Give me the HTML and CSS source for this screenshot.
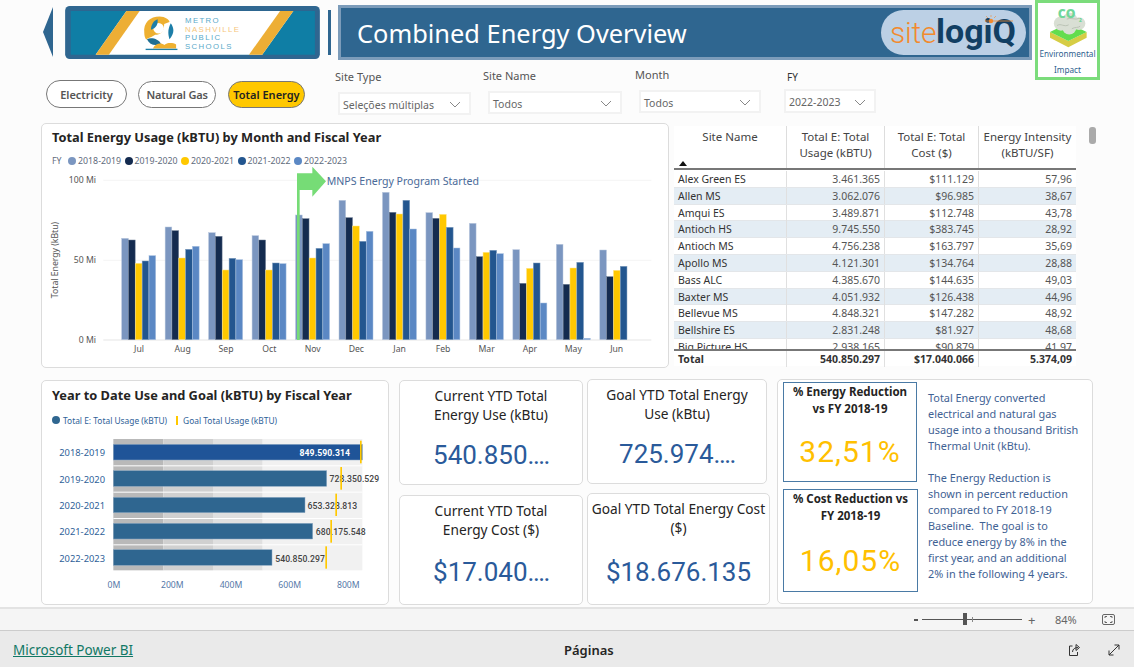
FILE: index.html
```html
<!DOCTYPE html>
<html lang="en">
<head>
<meta charset="utf-8">
<title>Combined Energy Overview</title>
<link rel="stylesheet" href="styles.css">
</head>
<body>
<div class="page">
<main class="canvas">
  <header class="head">
    <div class="head-main">
      <div class="banner">
        <svg class="arrow" viewBox="0 0 10 50"><polygon points="10,0 0,25 10,50"/></svg>
        <svg class="logo" viewBox="73 18 769 160">
          <rect x="73" y="18" width="769" height="160" rx="14" fill="#2f6690"/>
          <rect x="90" y="33" width="737" height="132" fill="#0f7ea5"/>
          <polygon points="258,33 762,33 668,165 165,165" fill="#fff"/>
          <polygon points="258,33 298,33 205,165 165,165" fill="#edae35"/>
          <polygon points="722,33 762,33 668,165 628,165" fill="#edae35"/>
          <path d="M312 100C308 68 330 50 358 50C375 50 388 60 388 66L372 72C372 95 360 105 345 105C335 112 322 115 318 120C314 113 312 108 312 100Z" fill="#eeb030"/>
          <circle cx="355" cy="85" r="16" fill="#fff"/>
          <path d="M332 90C332 75 340 62 352 58C354 72 348 85 332 90Z" fill="#1d7ea8"/>
          <path d="M392 70C402 85 404 100 388 118C382 100 384 85 392 70Z" fill="#1d7ea8"/>
          <path d="M320 118C335 112 355 118 362 132C345 140 328 135 320 118Z" fill="#1f6f93"/>
          <path d="M338 146C345 130 365 128 372 136C380 128 398 128 408 134L408 146Z" fill="#eeb030"/>
          <rect x="316" y="147" width="96" height="4" fill="#1d7ea8"/>
          <text class="logo-t blue" x="435" y="68">METRO</text>
          <text class="logo-t orange" x="435" y="95">NASHVILLE</text>
          <text class="logo-t blue" x="435" y="122">PUBLIC</text>
          <text class="logo-t blue" x="435" y="149">SCHOOLS</text>
        </svg>
        <div class="divider"></div>
        <div class="title-bar">
          <h1 class="title">Combined Energy Overview</h1>
          <svg class="sitelogiq" viewBox="0 0 145 45">
            <rect x="0" y="0" width="145" height="45" rx="22.5" fill="#bcd0e5"/>
            <text class="sl-a" x="9" y="33">site</text>
            <text class="sl-b" x="55" y="33">logiQ</text>
            <line x1="104" y1="11" x2="132" y2="11" stroke="#f28a2e" stroke-width="0.8"/>
            <circle cx="110" cy="11" r="2.2" fill="#f28a2e"/>
            <path d="M110 5V7M105 6L107 8M115 6L113 8" stroke="#f28a2e" stroke-width="0.6"/>
          </svg>
        </div>
      </div>
      <div class="controls">
        <button class="pill pill-a">Electricity</button>
        <button class="pill pill-b">Natural Gas</button>
        <button class="pill pill-c">Total Energy</button>
        <div class="slicer s1">
          <div class="s-label">Site Type</div>
          <div class="s-box">Seleções múltiplas<svg class="chev" viewBox="0 0 12 7"><polyline points="1,1 6,6 11,1"/></svg></div>
        </div>
        <div class="slicer s2">
          <div class="s-label">Site Name</div>
          <div class="s-box">Todos<svg class="chev" viewBox="0 0 12 7"><polyline points="1,1 6,6 11,1"/></svg></div>
        </div>
        <div class="slicer s3">
          <div class="s-label">Month</div>
          <div class="s-box">Todos<svg class="chev" viewBox="0 0 12 7"><polyline points="1,1 6,6 11,1"/></svg></div>
        </div>
        <div class="slicer s4">
          <div class="s-label">FY</div>
          <div class="s-box">2022-2023<svg class="chev" viewBox="0 0 12 7"><polyline points="1,1 6,6 11,1"/></svg></div>
        </div>
      </div>
    </div>
    <div class="env">
      <svg class="env-icon" viewBox="530 8 128 140">
        <polygon points="538,98 595,126 652,98 652,116 595,146 538,116" fill="#d6cd45"/>
        <polygon points="538,98 595,70 652,98 595,126" fill="#63dd4e"/>
        <g fill="#d9dfd4">
          <circle cx="572" cy="72" r="22"/>
          <circle cx="600" cy="62" r="24"/>
          <circle cx="628" cy="72" r="20"/>
          <circle cx="598" cy="84" r="22"/>
        </g>
        <path d="M560 78C572 70 582 84 596 76M590 58C602 52 618 62 628 56M606 88C616 82 626 86 632 80" fill="none" stroke="#b9c2b4" stroke-width="3"/>
        <text class="co" x="562" y="54">CO</text>
        <text class="co2" x="628" y="66">2</text>
      </svg>
      <div class="env-text">Environmental</div>
      <div class="env-text second">Impact</div>
    </div>
  </header>

  <section class="middle">
    <div class="card chart-card">
      <h2 class="card-title">Total Energy Usage (kBTU) by Month and Fiscal Year</h2>
      <div class="legend">
        <span class="fy">FY</span>
        <span class="lg"><i class="dot c1"></i>2018-2019</span>
        <span class="lg"><i class="dot c2"></i>2019-2020</span>
        <span class="lg"><i class="dot c3"></i>2020-2021</span>
        <span class="lg"><i class="dot c4"></i>2021-2022</span>
        <span class="lg"><i class="dot c5"></i>2022-2023</span>
      </div>
      <svg class="plot" viewBox="0 0 626 198">
        <g transform="translate(-2 -47) scale(.33333)">
          <line class="grid" x1="190" y1="181" x2="1834" y2="181"/>
          <line class="grid" x1="190" y1="421" x2="1834" y2="421"/>
          <line class="grid base" x1="190" y1="660" x2="1834" y2="660"/>
          <text class="ax end" x="168" y="190">100 Mi</text>
          <text class="ax end" x="168" y="429">50 Mi</text>
          <text class="ax end" x="168" y="668">0 Mi</text>
          <text class="ax mid" transform="translate(54 420) rotate(-90)">Total Energy (kBtu)</text>
          <g transform="translate(245)"><rect class="f1" x="0" y="355" width="20" height="304"/><rect class="f2" x="20.5" y="360" width="20" height="299"/><rect class="f3" x="41" y="430" width="20" height="229"/><rect class="f4" x="61.5" y="423" width="20" height="236"/><rect class="f5" x="82" y="407" width="20" height="252"/></g>
          <g transform="translate(375.4)"><rect class="f1" x="0" y="321" width="20" height="338"/><rect class="f2" x="20.5" y="332" width="20" height="327"/><rect class="f3" x="41" y="414" width="20" height="245"/><rect class="f4" x="61.5" y="388" width="20" height="271"/><rect class="f5" x="82" y="379" width="20" height="280"/></g>
          <g transform="translate(505.8)"><rect class="f1" x="0" y="338" width="20" height="321"/><rect class="f2" x="20.5" y="349" width="20" height="310"/><rect class="f3" x="41" y="450" width="20" height="209"/><rect class="f4" x="61.5" y="415" width="20" height="244"/><rect class="f5" x="82" y="419" width="20" height="240"/></g>
          <g transform="translate(636.2)"><rect class="f1" x="0" y="347" width="20" height="312"/><rect class="f2" x="20.5" y="360" width="20" height="299"/><rect class="f3" x="41" y="450" width="20" height="209"/><rect class="f4" x="61.5" y="429" width="20" height="230"/><rect class="f5" x="82" y="431" width="20" height="228"/></g>
          <g transform="translate(766.6)"><rect class="f1" x="0" y="285" width="20" height="374"/><rect class="f2" x="20.5" y="296" width="20" height="363"/><rect class="f3" x="41" y="414" width="20" height="245"/><rect class="f4" x="61.5" y="385" width="20" height="274"/><rect class="f5" x="82" y="371" width="20" height="288"/></g>
          <g transform="translate(897)"><rect class="f1" x="0" y="241" width="20" height="418"/><rect class="f2" x="20.5" y="293" width="20" height="366"/><rect class="f3" x="41" y="318" width="20" height="341"/><rect class="f4" x="61.5" y="364" width="20" height="295"/><rect class="f5" x="82" y="334" width="20" height="325"/></g>
          <g transform="translate(1027.4)"><rect class="f1" x="0" y="217" width="20" height="442"/><rect class="f2" x="20.5" y="277" width="20" height="382"/><rect class="f3" x="41" y="282" width="20" height="377"/><rect class="f4" x="61.5" y="241" width="20" height="418"/><rect class="f5" x="82" y="327" width="20" height="332"/></g>
          <g transform="translate(1157.8)"><rect class="f1" x="0" y="278" width="20" height="381"/><rect class="f2" x="20.5" y="295" width="20" height="364"/><rect class="f3" x="41" y="283" width="20" height="376"/><rect class="f4" x="61.5" y="322" width="20" height="337"/><rect class="f5" x="82" y="384" width="20" height="275"/></g>
          <g transform="translate(1288.2)"><rect class="f1" x="0" y="310" width="20" height="349"/><rect class="f2" x="20.5" y="410" width="20" height="249"/><rect class="f3" x="41" y="397" width="20" height="262"/><rect class="f4" x="61.5" y="391" width="20" height="268"/><rect class="f5" x="82" y="401" width="20" height="258"/></g>
          <g transform="translate(1418.6)"><rect class="f1" x="0" y="389" width="20" height="270"/><rect class="f2" x="20.5" y="490" width="20" height="169"/><rect class="f3" x="41" y="445" width="20" height="214"/><rect class="f4" x="61.5" y="429" width="20" height="230"/><rect class="f5" x="82" y="549" width="20" height="110"/></g>
          <g transform="translate(1549)"><rect class="f1" x="0" y="373" width="20" height="286"/><rect class="f2" x="20.5" y="493" width="20" height="166"/><rect class="f3" x="41" y="444" width="20" height="215"/><rect class="f4" x="61.5" y="427" width="20" height="232"/><rect class="f5" x="82" y="655" width="20" height="4"/></g>
          <g transform="translate(1679.4)"><rect class="f1" x="0" y="390" width="20" height="269"/><rect class="f2" x="20.5" y="470" width="20" height="189"/><rect class="f3" x="41" y="451" width="20" height="208"/><rect class="f4" x="61.5" y="439" width="20" height="220"/></g>
          <text class="ax mid" x="297" y="695">Jul</text>
          <text class="ax mid" x="428" y="695">Aug</text>
          <text class="ax mid" x="558" y="695">Sep</text>
          <text class="ax mid" x="688" y="695">Oct</text>
          <text class="ax mid" x="818" y="695">Nov</text>
          <text class="ax mid" x="949" y="695">Dec</text>
          <text class="ax mid" x="1079" y="695">Jan</text>
          <text class="ax mid" x="1209" y="695">Feb</text>
          <text class="ax mid" x="1340" y="695">Mar</text>
          <text class="ax mid" x="1470" y="695">Apr</text>
          <text class="ax mid" x="1600" y="695">May</text>
          <text class="ax mid" x="1730" y="695">Jun</text>
          <path class="flag" d="M771 660V160H817V140L858 184L817 230V210H779V660Z"/>
          <text class="note" x="860" y="194">MNPS Energy Program Started</text>
        </g>
      </svg>
    </div>

    <div class="table">
      <div class="t-row t-head">
        <div class="th th-first"><span>Site Name</span><i class="sort"></i></div>
        <div class="th">Total E: Total<br>Usage (kBTU)</div>
        <div class="th">Total E: Total<br>Cost ($)</div>
        <div class="th">Energy Intensity<br>(kBTU/SF)</div>
      </div>
      <div class="t-body">
        <div class="t-row"><div class="td name">Alex Green ES</div><div class="td">3.461.365</div><div class="td">$111.129</div><div class="td">57,96</div></div>
        <div class="t-row alt"><div class="td name">Allen MS</div><div class="td">3.062.076</div><div class="td">$96.985</div><div class="td">38,67</div></div>
        <div class="t-row"><div class="td name">Amqui ES</div><div class="td">3.489.871</div><div class="td">$112.748</div><div class="td">43,78</div></div>
        <div class="t-row alt"><div class="td name">Antioch HS</div><div class="td">9.745.550</div><div class="td">$383.745</div><div class="td">28,92</div></div>
        <div class="t-row"><div class="td name">Antioch MS</div><div class="td">4.756.238</div><div class="td">$163.797</div><div class="td">35,69</div></div>
        <div class="t-row alt"><div class="td name">Apollo MS</div><div class="td">4.121.301</div><div class="td">$134.764</div><div class="td">28,88</div></div>
        <div class="t-row"><div class="td name">Bass ALC</div><div class="td">4.385.670</div><div class="td">$144.635</div><div class="td">49,03</div></div>
        <div class="t-row alt"><div class="td name">Baxter MS</div><div class="td">4.051.932</div><div class="td">$126.438</div><div class="td">44,96</div></div>
        <div class="t-row"><div class="td name">Bellevue MS</div><div class="td">4.848.321</div><div class="td">$147.282</div><div class="td">48,92</div></div>
        <div class="t-row alt"><div class="td name">Bellshire ES</div><div class="td">2.831.248</div><div class="td">$81.927</div><div class="td">48,68</div></div>
        <div class="t-row"><div class="td name">Big Picture HS</div><div class="td">2.938.165</div><div class="td">$90.879</div><div class="td">41,97</div></div>
      </div>
      <div class="t-row t-total"><div class="td name">Total</div><div class="td">540.850.297</div><div class="td">$17.040.066</div><div class="td">5.374,09</div></div>
    </div>
    <div class="thumb"></div>
  </section>

  <section class="bottom">
    <div class="card bullet-card">
      <h2 class="card-title">Year to Date Use and Goal (kBTU) by Fiscal Year</h2>
      <div class="legend legend2">
        <span class="lg2"><i class="dot big"></i>Total E: Total Usage (kBTU)</span>
        <span class="lg2 goal"><i class="tick"></i>Goal Total Usage (kBTU)</span>
      </div>
      <svg class="bullet" viewBox="0 0 346 176">
        <g transform="translate(-2 -48) scale(.33333)">
          <rect x="220" y="183" width="150" height="394" fill="#b9b9b9"/>
          <rect x="370" y="183" width="149" height="394" fill="#d0d0d0"/>
          <rect x="519" y="183" width="149" height="394" fill="#e0e0e0"/>
          <rect x="668" y="183" width="299" height="394" fill="#f1f1f1"/>
          <rect x="220" y="262" width="747" height="3" fill="#fff"/>
          <rect x="220" y="341" width="747" height="3" fill="#fff"/>
          <rect x="220" y="420" width="747" height="3" fill="#fff"/>
          <rect x="220" y="499" width="747" height="3" fill="#fff"/>
          <rect x="220" y="199" width="747" height="47" fill="#1f5498" stroke="#8ea9c4" stroke-width="1.5"/>
          <rect x="220" y="278" width="640" height="47" fill="#2f6690" stroke="#8ea9c4" stroke-width="1.5"/>
          <rect x="220" y="358" width="575" height="46" fill="#2f6690" stroke="#8ea9c4" stroke-width="1.5"/>
          <rect x="220" y="436" width="598" height="47" fill="#2f6690" stroke="#8ea9c4" stroke-width="1.5"/>
          <rect x="220" y="515" width="476" height="47" fill="#2f6690" stroke="#8ea9c4" stroke-width="1.5"/>
          <text class="bl lbl-w" x="930" y="233">849.590.314</text>
          <text class="bl" x="1018" y="313">728.350.529</text>
          <text class="bl" x="952" y="393">653.328.813</text>
          <text class="bl" x="977" y="471">680.175.548</text>
          <text class="bl" x="855" y="551">540.850.297</text>
          <rect class="gl" x="960" y="188" width="5" height="68"/>
          <rect class="gl" x="901" y="267" width="5" height="68"/>
          <rect class="gl" x="886" y="347" width="5" height="67"/>
          <rect class="gl" x="871" y="426" width="5" height="68"/>
          <rect class="gl" x="856" y="505" width="5" height="67"/>
          <text class="cat" x="195" y="234">2018-2019</text>
          <text class="cat" x="195" y="314">2019-2020</text>
          <text class="cat" x="195" y="393">2020-2021</text>
          <text class="cat" x="195" y="471">2021-2022</text>
          <text class="cat" x="195" y="551">2022-2023</text>
          <text class="xt" x="222" y="629">0M</text>
          <text class="xt" x="397" y="629">200M</text>
          <text class="xt" x="573" y="629">400M</text>
          <text class="xt" x="749" y="629">600M</text>
          <text class="xt" x="925" y="629">800M</text>
        </g>
      </svg>
    </div>

    <div class="kpi-col col-a">
      <div class="card kpi k1"><div class="kpi-title">Current YTD Total<br>Energy Use (kBtu)</div><div class="kpi-value">540.850<span class="dots">....</span></div></div>
      <div class="card kpi k3"><div class="kpi-title">Current YTD Total<br>Energy Cost ($)</div><div class="kpi-value">$17.040<span class="dots">....</span></div></div>
    </div>
    <div class="kpi-col col-b">
      <div class="card kpi k2"><div class="kpi-title">Goal YTD Total Energy<br>Use (kBtu)</div><div class="kpi-value">725.974<span class="dots">....</span></div></div>
      <div class="card kpi k4"><div class="kpi-title">Goal YTD Total Energy Cost<br>($)</div><div class="kpi-value">$18.676.135</div></div>
    </div>

    <div class="card panel">
      <div class="boxes">
        <div class="box b1"><div class="box-title">% Energy Reduction<br>vs FY 2018-19</div><div class="box-value">32,51%</div></div>
        <div class="box b2"><div class="box-title">% Cost Reduction vs<br>FY 2018-19</div><div class="box-value">16,05%</div></div>
      </div>
      <p class="note-text">Total Energy converted<br>electrical and natural gas<br>usage into a thousand British<br>Thermal Unit (kBtu).<br><br>The Energy Reduction is<br>shown in percent reduction<br>compared to FY 2018-19<br>Baseline.&nbsp; The goal is to<br>reduce energy by 8% in the<br>first year, and an additional<br>2% in the following 4 years.</p>
    </div>
  </section>
</main>

<div class="zoombar">
  <span class="z-minus"></span>
  <div class="z-track"><i class="z-center"></i><i class="z-thumb"></i></div>
  <span class="z-plus">+</span>
  <span class="z-pct">84%</span>
  <svg class="z-fit" viewBox="0 0 13 11"><rect x="0.5" y="0.5" width="12" height="10" rx="1.5"/><path d="M3 4V2.5H5M8 2.5H10V4M10 7V8.5H8M5 8.5H3V7"/></svg>
</div>
<footer class="footer">
  <a class="pbi" href="#">Microsoft Power BI</a>
  <span class="pages">Páginas</span>
  <svg class="f-ico share" viewBox="0 0 14 14"><path d="M5.5 3H2.5V12.5H10.5V9"/><path d="M5.5 9C5.5 6 8 4.5 11 4.5"/><path d="M9 1.5L12.5 4.5L9 7.5Z"/></svg>
  <svg class="f-ico expand" viewBox="0 0 14 14"><path d="M2 12L12 2M7.5 2H12V6.500M2 7.500V12H6.500"/></svg>
</footer>
</div>
</body>
</html>
```

FILE: styles.css
```css
* { box-sizing: border-box; }
html, body { margin: 0; padding: 0; }
body { font-family: "Noto Sans", "Open Sans", sans-serif; background: #fcfcfc; color: #333; overflow: hidden; }
.page { width: 1134px; height: 667px; display: flex; flex-direction: column; overflow: hidden; }
.canvas { height: 607px; flex: none; }

/* header */
.head { display: flex; height: 123px; }
.head-main { width: 1035px; flex: none; }
.banner { display: flex; height: 65px; padding: 5px 0 0 43px; }
.arrow { width: 10px; height: 50px; margin-top: 2px; fill: #2f6690; flex: none; }
.logo { width: 257px; height: 53px; margin: 1px 0 0 11px; flex: none; }
.logo-t { font-family: "Liberation Sans", sans-serif; font-size: 23.500px; letter-spacing: 4.200px; }
.logo-t.blue { fill: #59a9c9; }
.logo-t.orange { fill: #f6c67c; }
.divider { width: 3px; height: 45px; margin: 5px 0 0 7px; background: #2f6690; flex: none; }
.title-bar { width: 694px; height: 55px; margin-left: 7px; background: #2f6690; border: 3px solid #7c9cba; display: flex; align-items: center; justify-content: space-between; padding: 0 3px 0 16px; flex: none; }
.title { margin: 0; font-size: 25.400px; font-weight: 400; color: #fff; white-space: nowrap; }
.sitelogiq { width: 145px; height: 45px; flex: none; }
.sl-a { font-family: Roboto, sans-serif; font-size: 30px; font-weight: 300; fill: #f28a2e; letter-spacing: -.2px; }
.sl-b { font-family: Roboto, sans-serif; font-size: 34px; font-weight: 700; fill: #123f63; }

/* controls */
.controls { display: flex; padding-left: 46px; }
.pill { font: 600 11px "Noto Sans", sans-serif; color: #555; background: #fff; border: 1px solid #777; border-radius: 14px; height: 27px; padding: 0; flex: none; margin-top: 16px; }
.pill-a { width: 81px; height: 28px; margin-top: 15px; }
.pill-b { width: 78px; margin-left: 11px; letter-spacing: -.2px; }
.pill-c { width: 77px; margin-left: 12px; background: #ffc800; color: #222; }
.slicer { flex: none; }
.s-label { font-size: 11px; line-height: 14px; color: #555; margin-bottom: 8px; }
.s-box { display: flex; align-items: center; justify-content: space-between; height: 23px; background: #fff; border: 2px solid #f2f2f2; font-size: 10.500px; color: #666; padding: 2px 8px 0 3px; }
.chev { width: 12px; height: 7px; fill: none; stroke: #888; stroke-width: 1; flex: none; }
.s1 { width: 136px; margin: 5px 0 0 30px; }
.s1 .s-box { margin-left: 3px; }
.s2 { width: 139px; margin: 4px 0 0 12px; }
.s2 .s-box { margin-left: 5px; }
.s3 { width: 126px; margin: 3px 0 0 13px; }
.s3 .s-box { margin-left: 4px; }
.s4 { width: 92px; margin: 5px 0 0 23px; }
.s4 .s-label { margin: 0 0 5px 3px; font-size: 10px; color: #333; }
.s4 .s-box { height: 24px; }

.env { width: 65px; height: 80px; border: 3px solid #7bdc7b; background: #fff; display: flex; flex-direction: column; align-items: center; flex: none; }
.env-icon { width: 42px; height: 45px; flex: none; }
.co { font: 800 38px "Open Sans", sans-serif; fill: #6fd79a; }
.co2 { font: 800 15px "Open Sans", sans-serif; fill: #6fd79a; }
.env-text { font-size: 8.200px; line-height: 12px; color: #2f5f8f; white-space: nowrap; }
.env-text.second { margin-top: 4px; }

/* cards */
.card { background: #fff; border: 1px solid #dcdcdc; border-radius: 5px; flex: none; }
.middle { display: flex; height: 245px; padding-left: 41px; }
.chart-card { width: 628px; height: 245px; padding: 3px 0 0; }
.card-title { margin: 0 0 0 10px; font-size: 12.800px; line-height: 20px; font-weight: 700; color: #252423; white-space: nowrap; }
.legend { display: flex; align-items: center; height: 12px; margin: 8px 0 0 10px; font-size: 8.800px; color: #5f6b7c; white-space: nowrap; }
.fy { width: 16px; }
.lg { display: flex; align-items: center; width: 56.500px; }
.dot { display: block; width: 8px; height: 8px; border-radius: 50%; margin-right: 2px; flex: none; }
.c1 { background: #7b96c0; }
.c2 { background: #142b4f; }
.c3 { background: #ffc800; }
.c4 { background: #23568f; }
.c5 { background: #5b88c4; }
.plot { display: block; width: 626px; height: 198px; overflow: visible; }
.grid { stroke: #eeeeee; stroke-width: 2; }
.grid.base { stroke-width: 4; }
.ax { font-family: "Noto Sans", sans-serif; font-size: 26px; fill: #555; }
.end { text-anchor: end; }
.mid { text-anchor: middle; }
.f1 { fill: #7b96c0; stroke: #b9c8de; stroke-width: 1.500; }
.f2 { fill: #142b4f; stroke: #6e7e95; stroke-width: 1.500; }
.f3 { fill: #ffc800; stroke: #ffe58a; stroke-width: 1.500; }
.f4 { fill: #23568f; stroke: #7b9abc; stroke-width: 1.500; }
.f5 { fill: #5b88c4; stroke: #a7c0e0; stroke-width: 1.500; }
.flag { fill: #76dc76; }
.note { font-family: "Noto Sans", sans-serif; font-size: 31.800px; fill: #4a6a99; }

/* table */
.table { width: 402px; height: 240px; margin: 3px 0 0 5px; background: #fff; flex: none; font-size: 10.500px; }
.t-row { display: grid; grid-template-columns: 112px 98px 94px 98px; height: 16.800px; }
.t-head { height: 44px; border-bottom: 2px solid #777; }
.th { border-left: 1px solid #ddd; text-align: center; font-size: 11.500px; line-height: 16px; color: #444; padding-top: 3px; }
.th-first { border-left: 0; display: flex; flex-direction: column; align-items: center; }
.sort { align-self: flex-start; margin: auto 0 2px 5px; width: 0; height: 0; border: 4px solid transparent; border-top: 0; border-bottom: 5px solid #111; }
.t-body { height: 179px; overflow: hidden; padding-top: 1px; }
.t-row.alt { background: #e4edf4; }
.t-body .t-row { border-bottom: 1px solid #e3e6e9; }
.td { border-left: 1px solid #e0e0e0; text-align: right; line-height: 16px; padding-right: 4px; color: #555; white-space: nowrap; }
.td.name { border-left: 0; text-align: left; padding: 0 0 0 4px; color: #333; }
.t-total { height: 17px; border-top: 2px solid #777; font-weight: 700; }
.t-total .td { color: #333; }
.thumb { width: 7px; height: 17px; margin: 4px 0 0 13px; background: #aaaaaa; border-radius: 3px; flex: none; }

/* bottom */
.bottom { display: flex; height: 239px; margin-top: 11px; padding-left: 41px; }
.bullet-card { width: 348px; height: 225px; padding-top: 4px; margin-top: 1px; }
.legend2 { margin-top: 9px; font-size: 8.400px; color: #2f6298; }
.lg2 { display: flex; align-items: center; }
.dot.big { background: #2f6690; margin-right: 3px; }
.goal { margin-left: 9px; }
.tick { display: block; width: 2px; height: 9px; background: #ffc800; margin-right: 5px; }
.bullet { display: block; width: 346px; height: 176px; overflow: visible; }
.bl { font-family: Roboto, sans-serif; font-size: 26px; letter-spacing: .2px; text-anchor: end; fill: #444; font-weight: 500; }
.lbl-w { fill: #fff; font-weight: 700; }
.gl { fill: #ffc800; }
.cat { font-family: "Noto Sans", sans-serif; font-size: 28px; text-anchor: end; fill: #2f5f99; }
.xt { font-family: "Noto Sans", sans-serif; font-size: 26px; text-anchor: middle; fill: #5578a8; }

.kpi-col { flex: none; }
.col-a { width: 184px; margin-left: 10px; padding-top: 1px; }
.col-b { width: 183px; margin-left: 4px; }
.kpi { text-align: center; padding-top: 5px; }
.kpi-title { font-size: 13.700px; line-height: 19px; color: #252423; white-space: nowrap; }
.kpi-value { font-family: Roboto, sans-serif; font-size: 26px; line-height: 34px; color: #2a5a9a; }
.dots { letter-spacing: -1.500px; }
.k1 { width: 184px; height: 105px; }
.k1 .kpi-value { margin-top: 14px; }
.k3 { width: 184px; height: 110px; margin-top: 10px; }
.k3 .kpi-value { margin-top: 16px; }
.k2 { width: 180px; height: 105px; }
.k2 .kpi-value { margin-top: 14px; }
.k4 { width: 183px; height: 112px; margin-top: 9px; }
.k4 .kpi-value { margin-top: 18px; }

.panel { width: 316px; height: 225px; margin-left: 7px; display: flex; padding: 2px 0 0 5px; }
.boxes { width: 135px; flex: none; }
.box { border: 1.500px solid #4a7aa5; text-align: center; background: #fff; }
.box-title { font-size: 11.500px; line-height: 17px; font-weight: 700; color: #252423; white-space: nowrap; }
.box-value { font-family: Roboto, sans-serif; font-size: 30px; line-height: 36px; color: #ffc000; letter-spacing: 1px; }
.b1 { width: 134px; height: 100px; }
.b1 .box-value { margin-top: 17px; }
.b2 { width: 135px; height: 103px; margin-top: 7px; }
.b2 .box-value { margin-top: 19px; }
.note-text { margin: 8px 0 0 10px; font-size: 10.900px; line-height: 16px; color: #3f6294; white-space: nowrap; }

/* bottom chrome */
.zoombar { height: 24px; flex: none; background: #f5f5f5; border-top: 2px solid #e3e3e3; border-bottom: 1px solid #cccccc; display: flex; align-items: center; padding-left: 914px; color: #666; }
.z-minus { width: 4px; height: 2px; background: #555; flex: none; }
.z-track { position: relative; width: 100px; height: 1px; background: #555; margin-left: 4px; flex: none; }
.z-thumb { position: absolute; left: 41px; top: -6px; width: 4px; height: 12px; background: #555; }
.z-center { position: absolute; left: 50px; top: -2px; width: 1px; height: 5px; background: #888; }
.z-plus { font-size: 13px; margin-left: 6px; width: 10px; }
.z-pct { font-size: 11px; margin-left: 17px; width: 28px; }
.z-fit { width: 13px; height: 11px; margin-left: 19px; fill: none; stroke: #666; stroke-width: 1; flex: none; }
.footer { height: 36px; flex: none; background: #eaeaea; display: flex; align-items: center; padding: 2px 0 0 13px; }
.pbi { font-size: 13.500px; color: #117865; text-decoration: underline; width: 551px; flex: none; white-space: nowrap; }
.pages { font-size: 13px; font-weight: 600; color: #252423; width: 503px; flex: none; }
.f-ico { width: 14px; height: 14px; fill: none; stroke: #333; stroke-width: 1; flex: none; }
.expand { margin-left: 26px; }
```
